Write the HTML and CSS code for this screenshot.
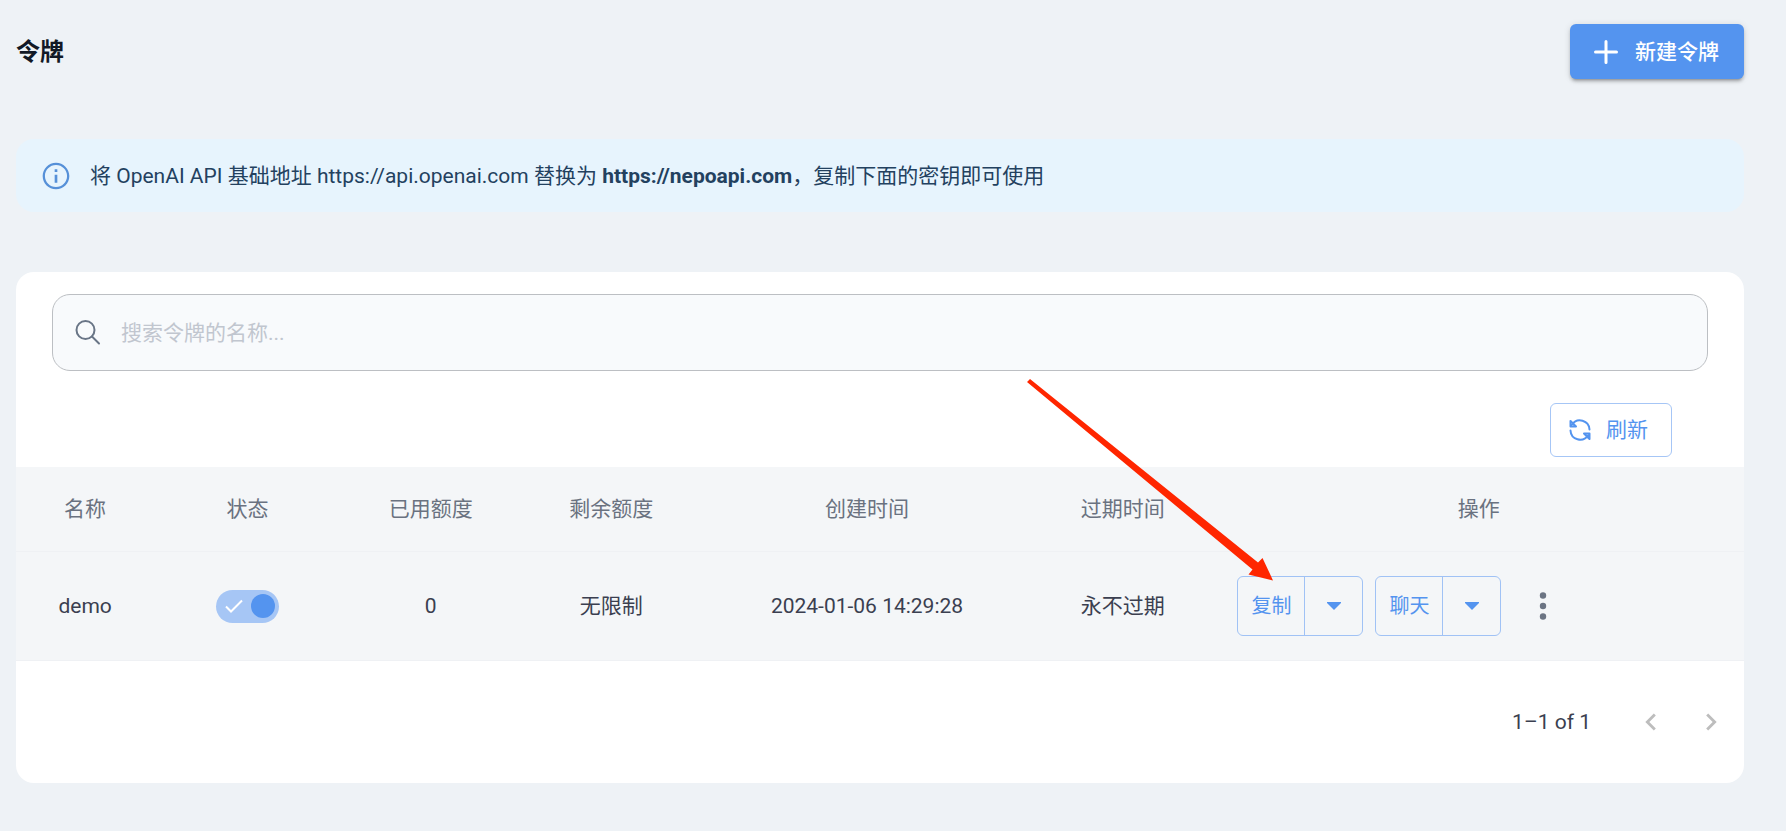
FILE: index.html
```html
<!DOCTYPE html>
<html lang="zh-CN">
<head>
<meta charset="utf-8">
<title>令牌</title>
<link rel="stylesheet" href="styles.css">
</head>
<body>
<main class="page">
  <header class="page-header">
    <h1 class="page-title">令牌</h1>
    <button class="btn btn-primary" type="button">
      <svg class="icon-plus" viewBox="0 0 30 30" fill="none" stroke="currentColor" stroke-width="3" stroke-linecap="round" aria-hidden="true"><path d="M15 4.500v21M4.500 15h21"/></svg>
      新建令牌
    </button>
  </header>

  <div class="alert" role="status">
    <svg class="icon-info" viewBox="0 0 24 24" fill="currentColor" aria-hidden="true"><path d="M11 7h2v2h-2zm0 4h2v6h-2zm1-9C6.480 2 2 6.480 2 12s4.480 10 10 10 10-4.480 10-10S17.520 2 12 2zm0 18.300c-4.600 0-8.300-3.700-8.300-8.300S7.400 3.700 12 3.700s8.300 3.700 8.300 8.300-3.700 8.300-8.300 8.300z"/></svg>
    <p class="alert-text">将 OpenAI API 基础地址 https://api.openai.com 替换为 <b>https://nepoapi.com</b>，复制下面的密钥即可使用</p>
  </div>

  <section class="card">
    <label class="search">
      <svg class="icon-search" viewBox="0 0 30 30" fill="none" stroke="currentColor" stroke-width="2" stroke-linecap="round" aria-hidden="true"><circle cx="12.500" cy="12" r="9"/><path d="M19 18.500l7 7"/></svg>
      <input class="search-input" type="text" placeholder="搜索令牌的名称..." aria-label="搜索令牌的名称">
    </label>

    <div class="toolbar">
      <button class="btn btn-outline" type="button">
        <svg class="icon-refresh" viewBox="0 0 24 24" fill="none" stroke="currentColor" stroke-width="2" stroke-linecap="round" stroke-linejoin="round" aria-hidden="true"><path d="M21.500 11.500A9.600 9.600 0 0 0 4 6.500M2.500 3v5.500H8zM2.500 12.500A9.600 9.600 0 0 0 20 17.500M21.500 21v-5.500H16z"/></svg>
        刷新
      </button>
    </div>

    <table class="tokens">
      <colgroup>
        <col class="col-name"><col class="col-status"><col class="col-used"><col class="col-left"><col class="col-created"><col class="col-expires"><col>
      </colgroup>
      <thead>
        <tr><th>名称</th><th>状态</th><th>已用额度</th><th>剩余额度</th><th>创建时间</th><th>过期时间</th><th>操作</th></tr>
      </thead>
      <tbody>
        <tr>
          <td>demo</td>
          <td>
            <label class="switch">
              <input class="switch-input" type="checkbox" checked aria-label="启用 demo">
              <svg class="switch-check" viewBox="0 0 18 14" fill="none" stroke="#fff" stroke-width="2" aria-hidden="true"><path d="M1 7.500l5 5L17 1.500"/></svg>
            </label>
          </td>
          <td>0</td>
          <td>无限制</td>
          <td>2024-01-06 14:29:28</td>
          <td>永不过期</td>
          <td>
            <div class="actions">
              <div class="split">
                <button class="split-main" type="button">复制</button>
                <button class="split-toggle" type="button" aria-label="更多复制选项"><svg class="icon-caret" viewBox="0 0 14 8" aria-hidden="true"><path d="M0 0h14v1L7 8 0 1z" fill="currentColor"/></svg></button>
                <svg class="arrow" viewBox="0 0 248 204" aria-hidden="true"><path d="M1 4L4 1 232 184.500 236.500 180 247 202.500 222.500 196.500 226.500 191.500z" fill="#ff2600"/></svg>
              </div>
              <div class="split">
                <button class="split-main" type="button">聊天</button>
                <button class="split-toggle" type="button" aria-label="更多聊天选项"><svg class="icon-caret" viewBox="0 0 14 8" aria-hidden="true"><path d="M0 0h14v1L7 8 0 1z" fill="currentColor"/></svg></button>
              </div>
              <button class="icon-btn" type="button" aria-label="更多操作"><svg class="icon-more" viewBox="0 0 8 28" fill="currentColor" aria-hidden="true"><circle cx="4" cy="3.500" r="3.200"/><circle cx="4" cy="14" r="3.200"/><circle cx="4" cy="24.500" r="3.200"/></svg></button>
            </div>
          </td>
        </tr>
      </tbody>
    </table>

    <nav class="pager" aria-label="分页">
      <span class="pager-text">1–1 of 1</span>
      <div class="pager-buttons">
        <button class="icon-btn" type="button" disabled aria-label="上一页"><svg class="icon-chevron" viewBox="0 0 24 24" fill="currentColor" aria-hidden="true"><path d="M15.410 16.590 10.830 12l4.580-4.590L14 6l-6 6 6 6z"/></svg></button>
        <button class="icon-btn" type="button" disabled aria-label="下一页"><svg class="icon-chevron" viewBox="0 0 24 24" fill="currentColor" aria-hidden="true"><path d="M8.590 16.590 13.170 12 8.590 7.410 10 6l6 6-6 6z"/></svg></button>
      </div>
    </nav>
  </section>
</main>
</body>
</html>
```

FILE: styles.css
```css
* {
  box-sizing: border-box;
}

body {
  margin: 0;
  background: #eef2f6;
  color: #3b3f50;
  font-family: Roboto, "Noto Sans CJK SC", sans-serif;
  font-size: 21px;
  line-height: 32px;
}

button,
input {
  font: inherit;
}

button {
  cursor: pointer;
}

svg {
  display: block;
  flex: none;
}

.page {
  padding: 24px 42px 48px 16px;
}

.page-header {
  display: flex;
  align-items: center;
  justify-content: space-between;
}

.page-title {
  margin: 0;
  color: #121926;
  font-size: 24px;
  font-weight: 700;
}

.btn {
  display: flex;
  align-items: center;
  border-radius: 6px;
}

.btn-primary {
  gap: 14px;
  height: 55px;
  padding: 0 25px 0 21px;
  border: 0;
  background: #5494ef;
  color: #fff;
  font-weight: 500;
  box-shadow: 0 4px 2px -3px rgba(0, 0, 0, 0.2), 0 3px 3px rgba(0, 0, 0, 0.16), 0 1px 7px rgba(0, 0, 0, 0.12);
}

.btn-outline {
  gap: 14px;
  height: 54px;
  padding: 0 23px 0 17px;
  border: 1px solid #a6c6f6;
  background: #fff;
  color: #5494ef;
}

.icon-plus {
  width: 30px;
  height: 30px;
}

.alert {
  display: flex;
  align-items: center;
  gap: 18px;
  min-height: 73px;
  margin: 60px 0;
  padding: 0 24px;
  border-radius: 18px;
  background: #e7f4fd;
  color: #23415f;
}

.icon-info {
  width: 32px;
  height: 32px;
  color: #5690d8;
}

.alert-text {
  margin: 0;
}

.alert-text b {
  font-weight: 700;
}

.card {
  padding-top: 22px;
  border-radius: 18px;
  background: #fff;
}

.search {
  display: flex;
  align-items: center;
  gap: 18px;
  height: 77px;
  margin: 0 36px;
  padding: 0 20px;
  border: 1px solid #bcbfc3;
  border-radius: 18px;
  background: #f8fafc;
}

.icon-search {
  width: 30px;
  height: 30px;
  color: #697586;
}

.search-input {
  flex: 1;
  min-width: 0;
  padding: 0;
  border: 0;
  outline: 0;
  background: transparent;
  color: #3b3f50;
}

.search-input::placeholder {
  color: #c1c6cf;
  opacity: 1;
}

.toolbar {
  display: flex;
  justify-content: flex-end;
  padding: 32px 72px 10px;
}

.icon-refresh {
  width: 24px;
  height: 24px;
}

.tokens {
  width: 100%;
  table-layout: fixed;
  border-collapse: separate;
  border-spacing: 0;
  background: #f4f6f8;
  text-align: center;
}

.col-name { width: 8%; }
.col-status { width: 10.8%; }
.col-used { width: 10.4%; }
.col-left { width: 10.5%; }
.col-created { width: 19.1%; }
.col-expires { width: 10.5%; }

.tokens th,
.tokens td {
  padding: 24px;
  border-bottom: 1px solid #eff1f4;
  white-space: nowrap;
}

.tokens th {
  height: 85px;
  color: #6a7280;
  font-weight: 400;
}

.tokens td {
  height: 109px;
}

.switch {
  position: relative;
  display: block;
  width: 63px;
  height: 33px;
  margin: 0 auto;
}

.switch-input {
  appearance: none;
  display: flex;
  align-items: center;
  justify-content: flex-end;
  width: 100%;
  height: 100%;
  margin: 0;
  padding: 0 4px;
  border-radius: 17px;
  background: #a6c6f5;
}

.switch-input::before {
  content: "";
  width: 24px;
  height: 24px;
  border-radius: 50%;
  background: #5494ef;
}

.switch-check {
  position: absolute;
  top: 9px;
  left: 9px;
  width: 18px;
  height: 14px;
}

.actions {
  display: flex;
  align-items: center;
  gap: 12px;
}

.split {
  position: relative;
  display: flex;
  height: 60px;
  border: 1px solid #a0c2f5;
  border-radius: 6px;
  color: #5494ef;
  font-size: 20px;
}

.split-main,
.split-toggle {
  border: 0;
  background: transparent;
  color: inherit;
}

.split-main {
  width: 67px;
  padding: 0;
  border-right: 1px solid #a0c2f5;
}

.split-toggle {
  display: flex;
  align-items: center;
  justify-content: center;
  width: 57px;
  padding: 0;
}

.icon-caret {
  width: 14px;
  height: 8px;
}

.arrow {
  position: absolute;
  right: 88px;
  bottom: 53px;
  width: 248px;
  height: 204px;
  pointer-events: none;
}

.icon-btn {
  display: flex;
  align-items: center;
  justify-content: center;
  width: 60px;
  height: 60px;
  padding: 0;
  border: 0;
  background: transparent;
  color: #6b7483;
}

.icon-btn:disabled {
  color: #bdbdbd;
  cursor: default;
}

.icon-more {
  width: 8px;
  height: 28px;
}

.pager {
  display: flex;
  align-items: center;
  justify-content: flex-end;
  gap: 30px;
  height: 122px;
  padding-right: 3px;
}

.pager-buttons {
  display: flex;
}

.icon-chevron {
  width: 34px;
  height: 34px;
}
```
